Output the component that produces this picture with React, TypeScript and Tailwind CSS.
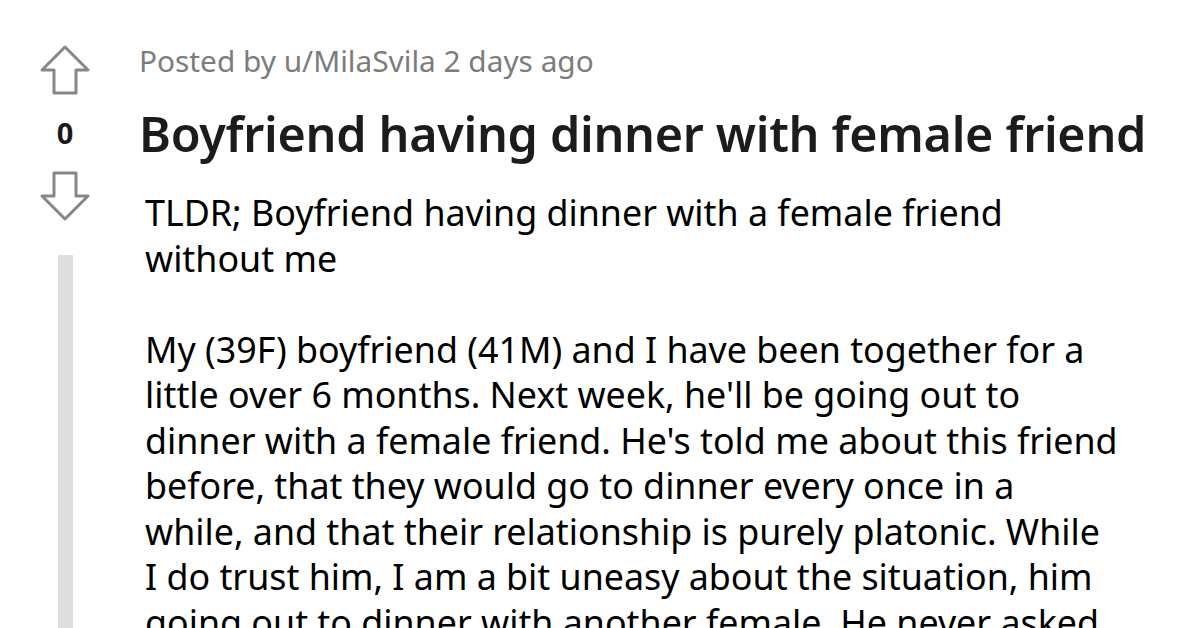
import React from "react";

function ArrowIcon({ down }: { down?: boolean }) {
  return (
    <svg
      width="50"
      height="50"
      viewBox="0 0 50 50"
      className={down ? "rotate-180" : ""}
      fill="none"
      stroke="#878787"
      strokeWidth="3"
      strokeLinejoin="round"
    >
      <path d="M25 2 L48 25 H36 V48 H14 V25 H2 Z" />
    </svg>
  );
}

export default function App() {
  return (
    <div className="w-[1200px] h-[628px] overflow-hidden bg-white flex">
      <div className="w-[130px] shrink-0 flex flex-col items-center pt-[45px]">
        <ArrowIcon />
        <span className="mt-[23px] h-[30px] text-[29px] leading-[30px] font-bold text-[#1a1a1a] font-['Noto_Sans',sans-serif]">
          0
        </span>
        <div className="mt-[23px] h-[50px]">
          <ArrowIcon down />
        </div>
        <div className="mt-[34px] w-[15px] flex-1 bg-[#dedede]" />
      </div>
      <div className="flex-1 pl-[9px] pt-[41px]">
        <p className="text-[29.8px] leading-[40px] text-[#7c7c7c] font-['Noto_Sans',sans-serif]">
          Posted by u/MilaSvila 2 days ago
        </p>
        <h1 className="mt-[24px] text-[48.5px] leading-[56px] font-semibold text-[#1c1c1c] font-['Noto_Sans',sans-serif] tracking-[-0.3px]">
          Boyfriend having dinner with female friend
        </h1>
        <div className="mt-[29px] pl-[6px] w-[1010px] text-[35.8px] leading-[45.5px] text-black font-['Noto_Sans',sans-serif] whitespace-nowrap">
          <p>
            TLDR; Boyfriend having dinner with a female friend
            <br />
            without me
          </p>
          <p className="mt-[45.5px]">
            My (39F) boyfriend (41M) and I have been together for a
            <br />
            little over 6 months. Next week, he'll be going out to
            <br />
            dinner with a female friend. He's told me about this friend
            <br />
            before, that they would go to dinner every once in a
            <br />
            while, and that their relationship is purely platonic. While
            <br />
            I do trust him, I am a bit uneasy about the situation, him
            <br />
            going out to dinner with another female. He never asked
          </p>
        </div>
      </div>
    </div>
  );
}
